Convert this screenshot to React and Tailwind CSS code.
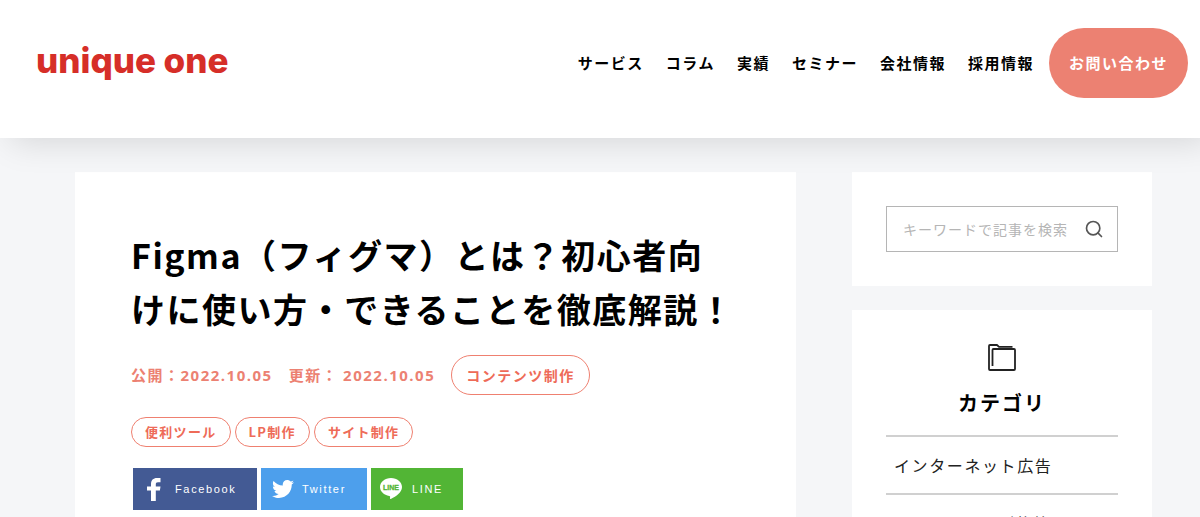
import React from 'react';
import { Search } from 'lucide-react';
import { FaTwitter } from 'react-icons/fa';

const navItems = ['サービス', 'コラム', '実績', 'セミナー', '会社情報', '採用情報'];
const tags = ['便利ツール', 'LP制作', 'サイト制作'];
const categories = ['インターネット広告', 'マーケティング施策'];

const FolderIcon = () => (
    <svg width="28" height="27" viewBox="0 0 28 27" fill="none" stroke="#222" strokeWidth="1.8" strokeLinejoin="round">
        <path d="M4.500 22V6q0-1 1-1H26q1 0 1 1v19q0 1-1 1H2q-1 0-1-1V2q0-1 1-1h7l2 1.800h13.500" />
    </svg>
);

const FacebookIcon = () => (
    <svg width="14" height="23" viewBox="0 0 14 23" fill="#fff">
        <path d="M4 23V12.600H0V8.400h4V6C4 2.200 6.200 0 10 0h3.500v4.200H11c-1.700 0-2.200.7-2.200 2.200v2h4.700l-.6 4.200H8.800V23z" />
    </svg>
);

const LineIcon = () => (
    <svg width="22" height="22" viewBox="0 0 22 22" className="tracking-normal">
        <path fill="#fff" d="M11 0C4.900 0 0 4 0 9c0 4.400 4 8.200 9.300 8.900 1 .2.900.6.700 2-.1 1 .2 1.400 1.200.9C16 18.500 22 14.500 22 9c0-5-4.900-9-11-9z" />
        <text x="11" y="11.500" textAnchor="middle" fontSize="7" fontWeight="700" fontFamily="Liberation Sans, sans-serif" fill="#52b535" stroke="#52b535" strokeWidth="0.3">LINE</text>
    </svg>
);

const shares = [
    { label: 'Facebook', icon: <FacebookIcon />, style: 'w-[124px] bg-[#435a94] pl-[14px] gap-[14px]' },
    { label: 'Twitter', icon: <FaTwitter size={22} />, style: 'w-[106px] bg-[#4d9fec] pl-[11px] gap-2' },
    { label: 'LINE', icon: <LineIcon />, style: 'w-[92px] bg-[#52b535] pl-[9px] gap-[10px]' },
];

const Header = () => (
    <header className="relative z-10 flex h-[138px] items-start justify-between bg-white pt-7 pr-3 pl-9 shadow-[10px_4px_32px_rgba(0,0,0,0.13)]">
        <a href="#" className="flex h-16 items-center font-['Inter',sans-serif] text-[35px] font-extrabold text-[#d62e28]">
            unique one
        </a>
        <nav className="flex h-[70px] items-center gap-[22px] text-[15px] font-bold tracking-widest">
            {navItems.map((item) => (
                <a key={item} href="#">{item}</a>
            ))}
            <a href="#" className="-ml-[7px] flex h-[70px] items-center rounded-full bg-[#ec8172] px-5 text-white">
                お問い合わせ
            </a>
        </nav>
    </header>
);

const Article = () => (
    <main className="flex-1 bg-white px-14 pt-14 pb-10">
        <h1 className="text-[34px] leading-[54px] font-bold tracking-[0.045em]">
            Figma（フィグマ）とは？初心者向
            <br className="hidden lg:block" />
            けに使い方・できることを徹底解説！
        </h1>
        <div className="mt-[19px] flex items-center gap-4 text-[15px] font-bold tracking-widest text-[#ec8172]">
            <span>公開：<time className="font-['Open_Sans']">2022.10.05</time></span>
            <span>更新： <time className="font-['Open_Sans']">2022.10.05</time></span>
            <a href="#" className="flex h-10 items-center rounded-full border border-[#ef8070] px-[14px] text-sm text-[#ee6b58]">
                コンテンツ制作
            </a>
        </div>
        <div className="mt-[22px] flex gap-1">
            {tags.map((tag) => (
                <a key={tag} href="#" className="flex h-[30px] items-center rounded-full border border-[#ef8070] px-[13px] text-[13px] font-bold tracking-widest text-[#ee6b58]">
                    {tag}
                </a>
            ))}
        </div>
        <div className="mt-[21px] ml-0.5 flex gap-1">
            {shares.map(({ label, icon, style }) => (
                <a key={label} href="#" className={`flex h-[42px] items-center font-['Liberation_Sans'] text-[11px] tracking-[0.15em] text-white ${style}`}>
                    {icon}
                    {label}
                </a>
            ))}
        </div>
    </main>
);

const Sidebar = () => (
    <aside className="flex w-[300px] flex-col gap-6">
        <form className="bg-white p-[34px]" onSubmit={(e) => e.preventDefault()}>
            <div className="flex h-[46px] items-center border border-[#b5b5b5] pr-[13px] pl-4">
                <input
                    type="text"
                    aria-label="キーワードで記事を検索"
                    placeholder="キーワードで記事を検索"
                    className="min-w-0 flex-1 text-sm tracking-[1px] outline-none placeholder:text-[#b5b5b5]"
                />
                <button type="submit" aria-label="検索">
                    <Search size={20} color="#555" />
                </button>
            </div>
        </form>
        <section className="flex-1 bg-white px-[34px] pt-[34px]">
            <div className="flex flex-col items-center">
                <FolderIcon />
                <h2 className="mt-[17px] text-xl leading-[30px] font-bold tracking-widest">カテゴリ</h2>
            </div>
            <ul className="mt-[17px]">
                {categories.map((category) => (
                    <li key={category} className="border-t-2 border-[#d0d0d0]">
                        <a href="#" className="flex h-14 items-center px-2 text-base tracking-widest text-[#222]">{category}</a>
                    </li>
                ))}
            </ul>
        </section>
    </aside>
);

export default function App() {
    return (
        <div className="h-screen overflow-hidden bg-[#f5f6f8] font-['Noto_Sans_CJK_JP',sans-serif] text-black">
            <Header />
            <div className="flex gap-14 pt-[34px] pr-12 pl-[75px]">
                <Article />
                <Sidebar />
            </div>
        </div>
    );
}
